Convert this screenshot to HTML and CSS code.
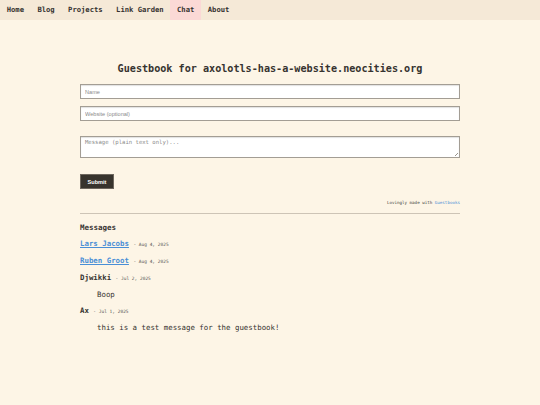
FILE: index.html
```html
<!DOCTYPE html>
<html lang="en">
<head>
  <meta charset="UTF-8">
  <title>Guestbook</title>
  <link rel="stylesheet" href="styles.css">
</head>
<body>
  <nav class="topnav">
    <a href="#">Home</a>
    <a href="#">Blog</a>
    <a href="#">Projects</a>
    <a href="#">Link Garden</a>
    <a href="#" class="active">Chat</a>
    <a href="#">About</a>
  </nav>
  <main class="guestbook">
    <h1>Guestbook for axolotls-has-a-website.neocities.org</h1>
    <form class="gb-form" autocomplete="off">
      <input type="text" class="field" placeholder="Name">
      <input type="text" class="field field-site" placeholder="Website (optional)">
      <div class="msg-wrap">
        <textarea class="field-msg" placeholder="Message (plain text only)..."></textarea>
      </div>
      <div><button type="submit">Submit</button></div>
    </form>
    <div class="credit">Lovingly made with <a href="#">Guestbooks</a></div>
    <hr>
    <h2>Messages</h2>
    <div class="messages">
      <div class="entry"><a href="#" class="who">Lars Jacobs</a> <span class="date">- Aug 4, 2025</span></div>
      <div class="entry"><a href="#" class="who">Ruben Groot</a> <span class="date">- Aug 4, 2025</span></div>
      <div class="entry"><span class="who">Djwikki</span> <span class="date">- Jul 2, 2025</span></div>
      <div class="body">Boop</div>
      <div class="entry"><span class="who">Ax</span> <span class="date">- Jul 1, 2025</span></div>
      <div class="body">this is a test message for the guestbook!</div>
    </div>
  </main>
</body>
</html>
```

FILE: styles.css
```css
body {
  margin: 0;
  background: #fdf5e6;
  color: #363330;
  font-family: "DejaVu Sans Mono", "Liberation Mono", monospace;
}
.topnav {
  display: flex;
  background: #f5e9d7;
  height: 20px;
}
.topnav a {
  padding: 0 6.7px;
  line-height: 20px;
  font-size: 7.2px;
  font-weight: bold;
  color: #363330;
  text-decoration: none;
}
.topnav a.active {
  background: #fbd9d6;
}
.guestbook {
  width: 380px;
  margin: 0 auto;
  padding-top: 43px;
}
h1 {
  margin: 0;
  text-align: center;
  font-size: 10.15px;
  line-height: 12px;
}
.gb-form {
  display: flex;
  flex-direction: column;
  margin-top: 9px;
}
.field, .field-msg {
  width: 100%;
  box-sizing: border-box;
  margin: 0;
  border: 1px solid #a39d94;
  box-shadow: inset 0 1px 1px rgba(0,0,0,0.12);
  background: #fff;
  font-size: 5.6px;
}
.field {
  height: 15px;
  padding: 0 4px;
  font-family: "Liberation Sans", Arial, sans-serif;
}
.field-site { margin-top: 7px; }
.msg-wrap {
  position: relative;
  margin-top: 15px;
  height: 22px;
}
.msg-wrap::after {
  content: "";
  position: absolute;
  right: 2px;
  bottom: 2px;
  width: 3px;
  height: 3px;
  background: linear-gradient(135deg, transparent 45%, #9a958d 45%, #9a958d 60%, transparent 60%);
}
.field-msg {
  display: block;
  height: 22px;
  padding: 2px 4px;
  font-family: "DejaVu Sans Mono", monospace;
  resize: none;
}
.field::placeholder, .field-msg::placeholder { color: #8a8a8a; }
button {
  margin-top: 16px;
  width: 34px;
  height: 15px;
  padding: 0;
  background: #37332d;
  color: #fff;
  border: 1px solid #6e675e;
  font-family: "Liberation Sans", Arial, sans-serif;
  font-size: 5.6px;
  font-weight: bold;
}
.credit {
  margin-top: 11px;
  text-align: right;
  font-size: 4.2px;
  line-height: 6px;
  color: #444;
}
.credit a { color: #4a8fd6; text-decoration: none; }
hr {
  margin: 7px 0 0;
  border: none;
  border-top: 1px solid #cdc4b6;
}
h2 {
  margin: 9px 0 0;
  font-size: 7.5px;
  line-height: 10px;
}
.messages {
  margin-top: 3px;
  font-size: 7.4px;
  line-height: 16px;
}
.who { font-weight: bold; }
a.who { color: #4a8fd6; }
.date { font-size: 4.5px; color: #555; }
.body { padding-left: 17px; }
```
